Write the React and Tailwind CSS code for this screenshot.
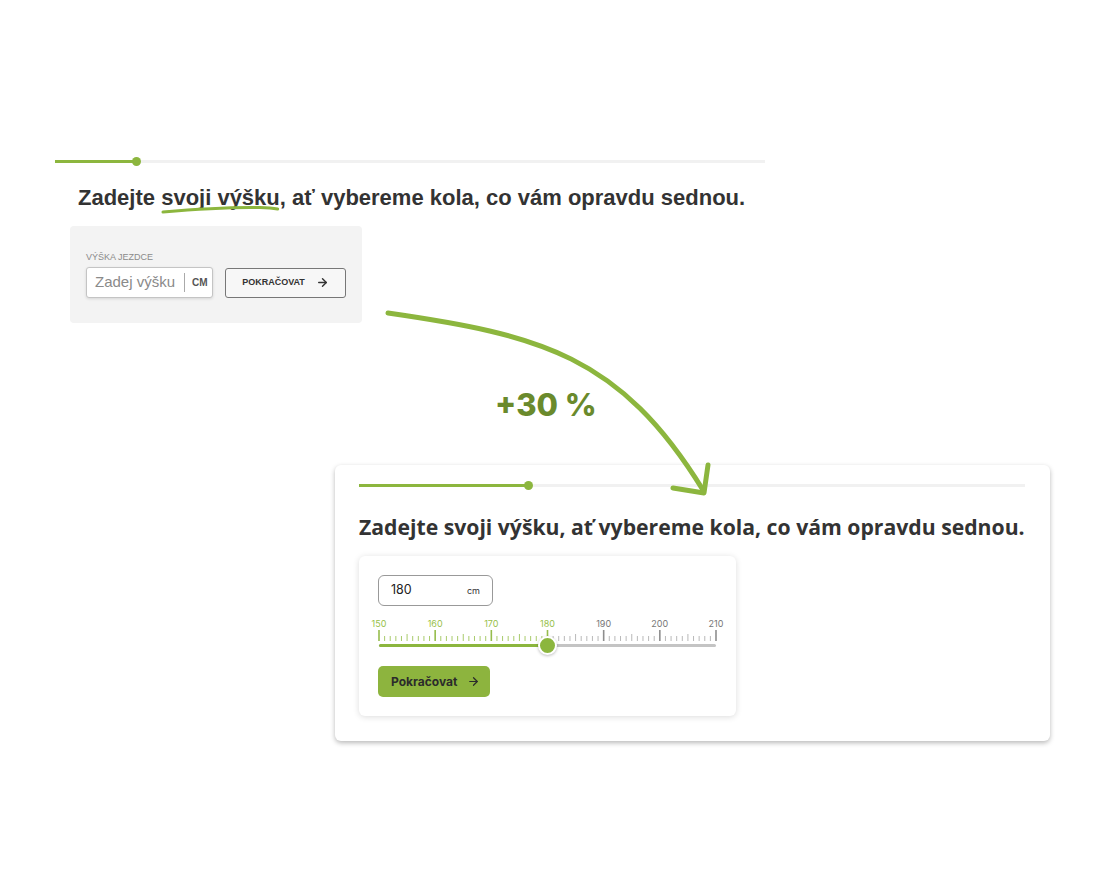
import React from "react";
import { ArrowRight } from "lucide-react";

const GREEN = "#8cb63e";

const Ticks = () => {
  const ticks = [];
  for (let i = 0; i <= 60; i++) {
    const x = 1 + i * (337 / 60);
    const major = i % 10 === 0;
    const mid = i % 5 === 0;
    const y1 = major ? 1 : mid ? 5 : 7;
    const on = i <= 30;
    let stroke = on ? "#a9cb6c" : "#b9b9b9";
    if (major) stroke = on ? "#96bd4c" : "#8e8e8e";
    ticks.push(
      <line key={i} x1={x} x2={x} y1={y1} y2={12} stroke={stroke} strokeWidth={major ? 1.6 : 1} />
    );
  }
  return (
    <svg width="339" height="12" className="block -ml-[1px]">
      {ticks}
    </svg>
  );
};

const HeightSlider = () => {
  const labels = [150, 160, 170, 180, 190, 200, 210];
  return (
    <div className="mt-[13px]">
      <div className="-mx-[10px] flex w-[357px] justify-between">
        {labels.map((l) => (
          <span
            key={l}
            className={
              "w-[20px] text-center text-[9px] leading-[10px] " +
              (l <= 180 ? "text-[#97bf4a]" : "text-[#777]")
            }
          >
            {l}
          </span>
        ))}
      </div>
      <Ticks />
      <div className="relative mt-[3px] h-[3px] w-[337px] rounded-full bg-[#c4c4c4]">
        <div className="h-full w-1/2 rounded-full bg-[#8cb63e]"></div>
        <div className="absolute left-[159px] top-[-8px] h-[19px] w-[19px] rounded-full border-2 border-white bg-[#8cb63e] shadow-[0_1px_3px_rgba(0,0,0,0.25)]"></div>
      </div>
    </div>
  );
};

export default function App() {
  return (
    <div className="relative h-[880px] w-[1100px] overflow-hidden bg-white pt-[160px]">
      {/* old version */}
      <div className="ml-[55px] w-[710px]">
        <div className="relative h-[3px] w-full bg-[#f1f1f1]">
          <div className="h-full w-[81px] bg-[#8cb63e]"></div>
          <div className="absolute left-[77px] top-[-3px] h-[9px] w-[9px] rounded-full bg-[#8cb63e]"></div>
        </div>
        <h2 className="ml-[23px] mt-[22px] whitespace-nowrap font-['Liberation_Sans',Arial,sans-serif] text-[22px] font-bold leading-[26px] text-[#333]">
          Zadejte{" "}
          <span className="relative">
            svoji výšku
            <svg
              className="absolute left-0 top-[20px] h-[9px] w-full"
              viewBox="0 0 120 9"
              preserveAspectRatio="none"
            >
              <path
                d="M2 7 C 30 4.5, 70 2, 100 2.5 C 110 2.8, 115 3.5, 118 4"
                fill="none"
                stroke="#8cb63e"
                strokeWidth="3"
                strokeLinecap="round"
              />
            </svg>
          </span>
          , ať vybereme kola, co vám opravdu sednou.
        </h2>
        <div className="ml-[15px] mt-[15px] h-[97px] w-[292px] rounded-[4px] bg-[#f3f3f3] px-[16px] pt-[26px] font-['Liberation_Sans',Arial,sans-serif]">
          <div className="text-[9px] leading-[10px] text-[#8a8a8a]">VÝŠKA JEZDCE</div>
          <div className="mt-[5px] flex items-center gap-[12px]">
            <div className="flex h-[31px] w-[127px] items-center rounded-[3px] border border-[#c4c4c4] bg-white pl-[8px] shadow-[0_1px_3px_rgba(0,0,0,0.12)]">
              <span className="text-[15px] text-[#8a8a8a]">Zadej výšku</span>
              <span className="ml-[9px] h-[19px] w-px bg-[#aaa]"></span>
              <span className="ml-[7px] text-[10px] font-bold text-[#555]">CM</span>
            </div>
            <div className="flex h-[30px] w-[121px] items-center justify-center gap-[11px] rounded-[3px] border-[1.5px] border-[#777] bg-[#f7f7f7]">
              <span className="text-[9px] font-bold text-[#333]">POKRAČOVAT</span>
              <ArrowRight size={13} strokeWidth={2.6} color="#333" />
            </div>
          </div>
        </div>
      </div>

      <div className="ml-[495px] mt-[62px] font-['Inter',sans-serif] text-[31px] font-extrabold leading-[40px] text-[#6a8a2c]">
        +30 %
      </div>

      {/* new version */}
      <div className="ml-[335px] mt-[40px] w-[715px] rounded-[6px] bg-white pb-[25px] pl-[24px] pr-[25px] pt-[19px] shadow-[0_2px_5px_rgba(0,0,0,0.28)]">
        <div className="relative h-[3px] w-full bg-[#f1f1f1]">
          <div className="h-full w-[169px] bg-[#8cb63e]"></div>
          <div className="absolute left-[165px] top-[-3px] h-[9px] w-[9px] rounded-full bg-[#8cb63e]"></div>
        </div>
        <h2 className="mt-[26px] whitespace-nowrap font-['Open_Sans',sans-serif] text-[21.2px] font-bold leading-[28px] text-[#333]">
          Zadejte svoji výšku, ať vybereme kola, co vám opravdu sednou.
        </h2>
        <div className="mt-[15px] w-[377px] rounded-[6px] bg-white px-[20px] py-[19px] font-['Inter',sans-serif] shadow-[0_1px_6px_rgba(0,0,0,0.14)]">
          <div className="-ml-[1px] flex h-[31px] w-[115px] items-center justify-between rounded-[6px] border border-[#999] pl-[12px] pr-[12px]">
            <span className="text-[12.5px] text-[#222]">180</span>
            <span className="text-[9px] text-[#333]">cm</span>
          </div>
          <HeightSlider />
          <div className="-ml-[1px] mt-[19px] flex h-[31px] w-[112px] items-center gap-[10px] rounded-[5px] bg-[#8db43e] pl-[13px]">
            <span className="text-[12px] font-bold text-[#2b2b2b]">Pokračovat</span>
            <ArrowRight size={13} strokeWidth={2.2} color="#2b2b2b" />
          </div>
        </div>
      </div>

      {/* curved arrow */}
      <svg className="pointer-events-none absolute left-0 top-0" width="1100" height="880">
        <path
          d="M388 313 C 540 335, 620 355, 703 490"
          fill="none"
          stroke={GREEN}
          strokeWidth="5"
          strokeLinecap="round"
        />
        <path
          d="M708 465 L704 493 L673 488"
          fill="none"
          stroke={GREEN}
          strokeWidth="5"
          strokeLinecap="round"
          strokeLinejoin="round"
        />
      </svg>
    </div>
  );
}
